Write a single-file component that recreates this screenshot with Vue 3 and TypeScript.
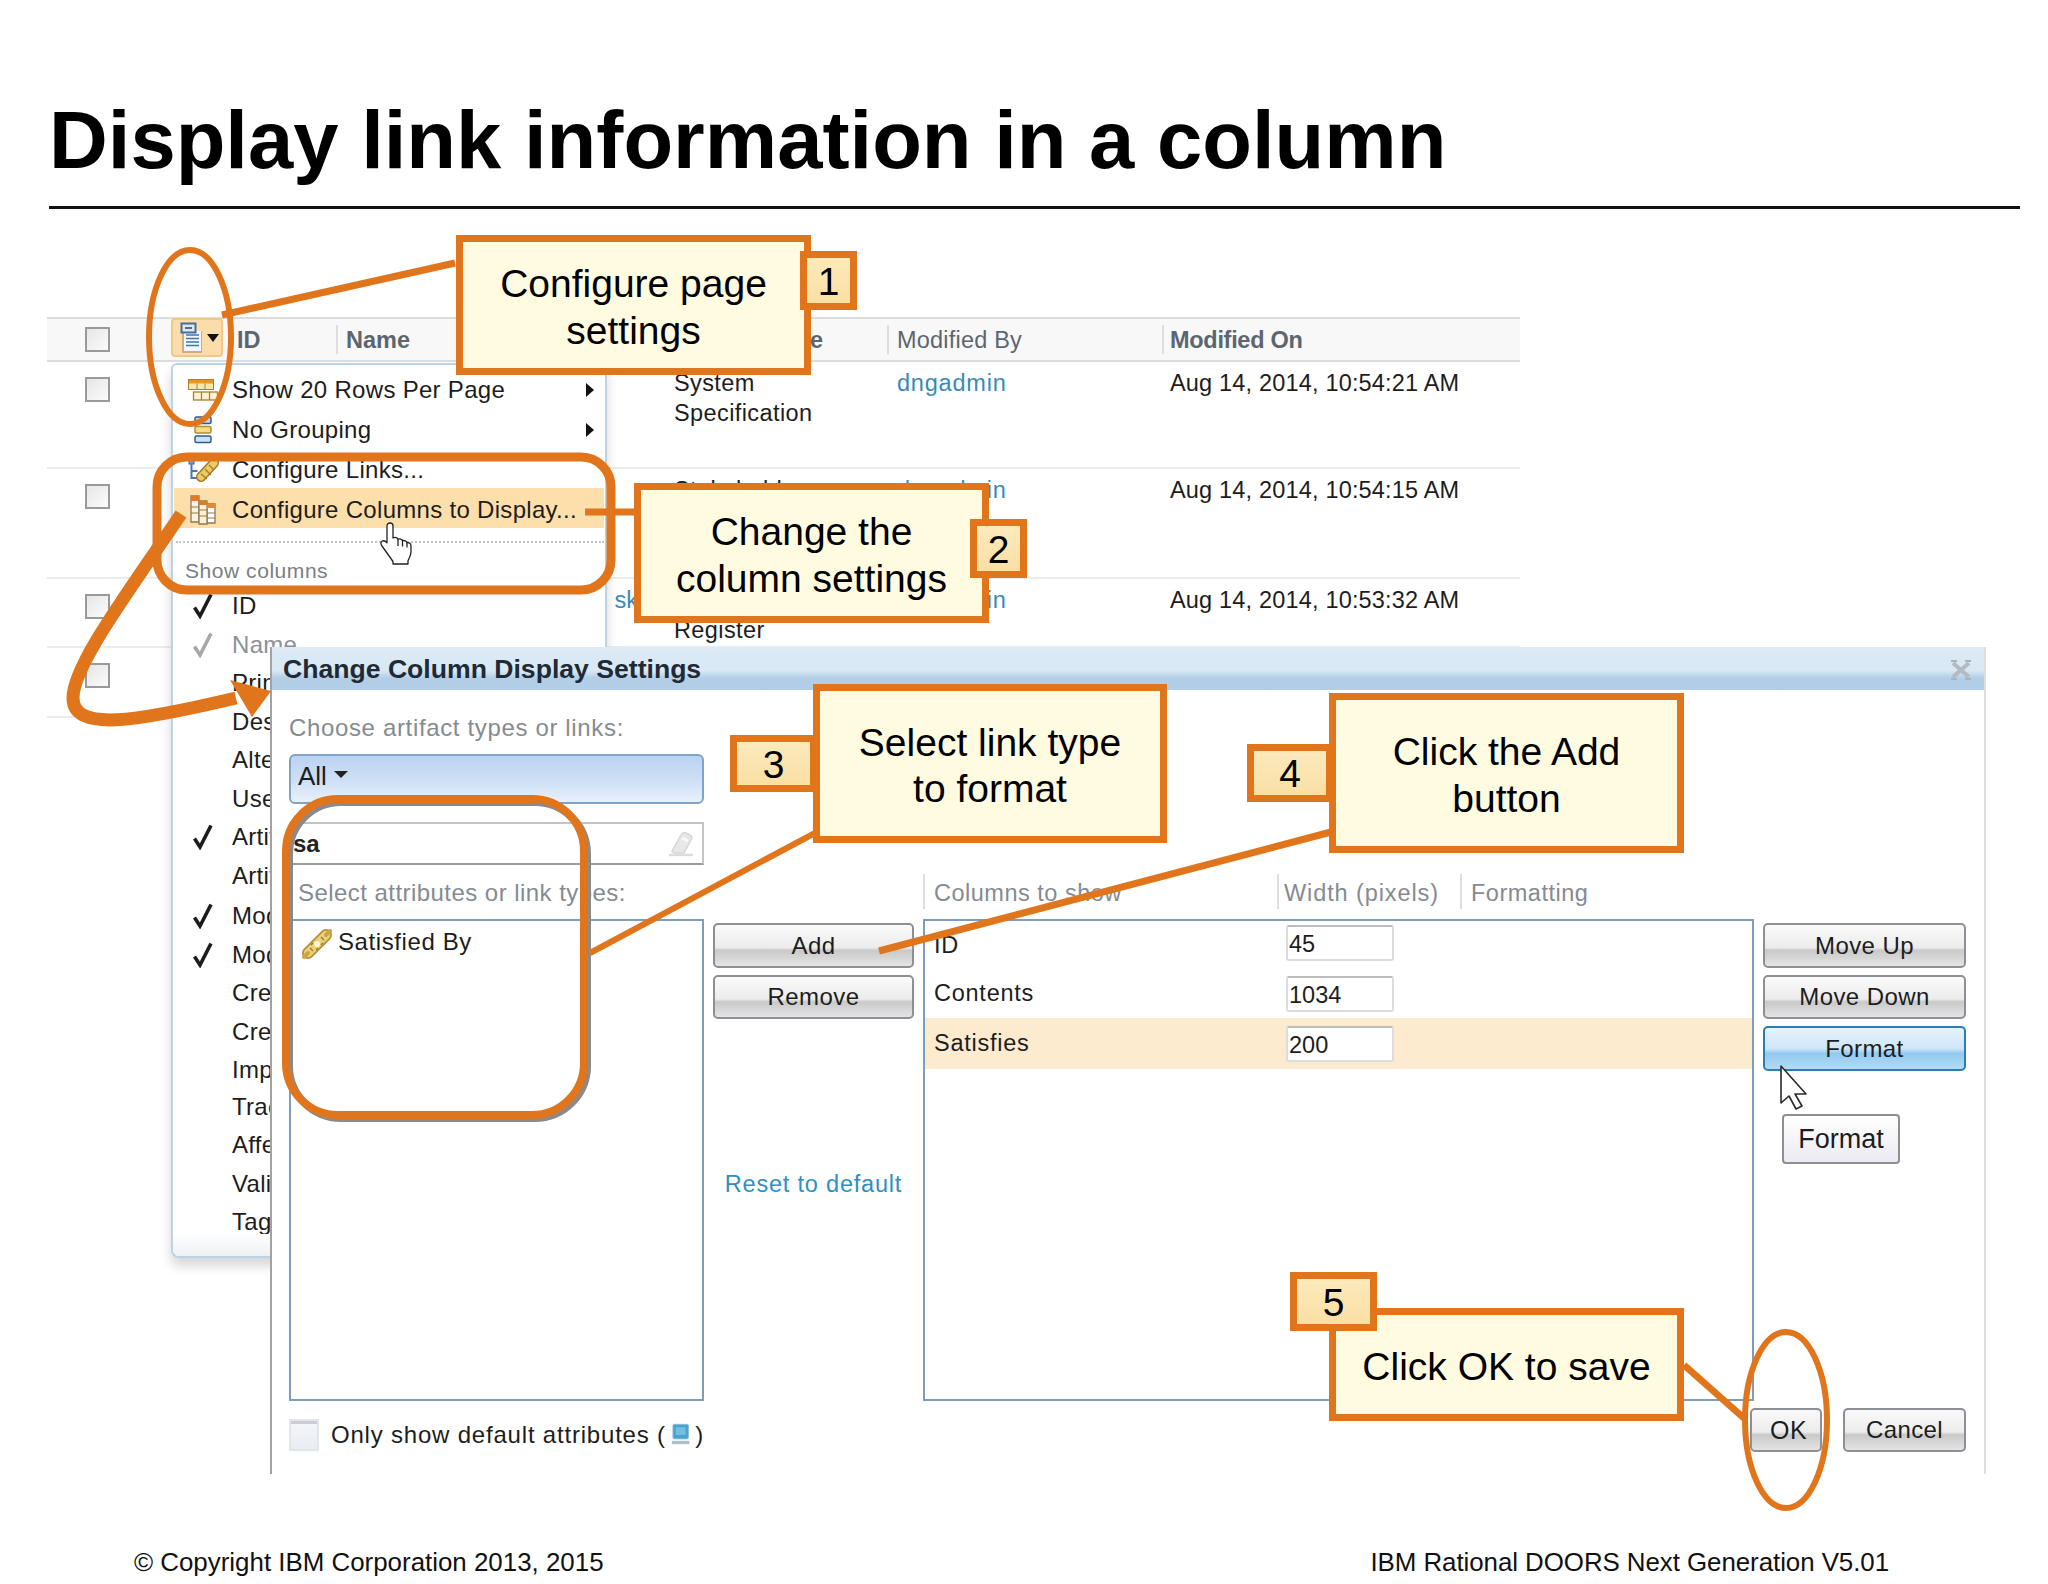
<script setup lang="ts">
interface MenuItem { label: string; icon?: string; arrow?: boolean; hl?: boolean }
interface ColItem { label: string; check?: 'on' | 'off'; dim?: boolean; cls?: string }

const rows = [
  { h: 107, top: ['System', 'Specification'], by: 'dngadmin', on: 'Aug 14, 2014, 10:54:21 AM', name: '' },
  { h: 110, top: ['Stakeholder', 'Requests'], by: 'dngadmin', on: 'Aug 14, 2014, 10:54:15 AM', name: '' },
  { h: 69, top: ['Risk', 'Register'], by: 'dngadmin', on: 'Aug 14, 2014, 10:53:32 AM', name: 'sk' },
  { h: 70, top: [], by: '', on: '', name: '' },
]
const actions: MenuItem[] = [
  { label: 'Show 20 Rows Per Page', icon: 'rows', arrow: true },
  { label: 'No Grouping', icon: 'group', arrow: true },
  { label: 'Configure Links...', icon: 'links' },
  { label: 'Configure Columns to Display...', icon: 'cols', hl: true },
]
const columns: ColItem[] = [
  { label: 'ID', check: 'on' },
  { label: 'Name', check: 'off', dim: true },
  { label: 'Primary Text' },
  { label: 'Description' },
  { label: 'Alternate Spelling' },
  { label: 'User Intent' },
  { label: 'Artifact Type', check: 'on' },
  { label: 'Artifact Format' },
  { label: 'Modified By', check: 'on', cls: 'down' },
  { label: 'Modified On', check: 'on' },
  { label: 'Created By' },
  { label: 'Created On' },
  { label: 'Imported From' },
  { label: 'Traced By', cls: 'up' },
  { label: 'Affected By' },
  { label: 'Validated By' },
  { label: 'Tags' },
]
const chosen = [
  { name: 'ID', width: '45', hl: false },
  { name: 'Contents', width: '1034', hl: false },
  { name: 'Satisfies', width: '200', hl: true },
]
const callouts = [
  { id: 'c1', lines: ['Configure page', 'settings'] },
  { id: 'c2', lines: ['Change the', 'column settings'] },
  { id: 'c3', lines: ['Select link type', 'to format'] },
  { id: 'c4', lines: ['Click the Add', 'button'] },
  { id: 'c5', lines: ['Click OK to save'] },
]
const badges = ['1', '2', '3', '4', '5']
</script>

<template>
  <div class="slide">
    <h1 class="title">Display link information in a column</h1>

    <section class="table">
      <div class="row head">
        <div class="cell first"><span class="box"></span></div>
        <div class="cell id-col">
          <span class="id-label">ID</span>
        </div>
        <div class="cell div strong">Name</div>
        <div class="cell strong type-col">Artifact Type</div>
        <div class="cell div medium">Modified By</div>
        <div class="cell div strong tight">Modified On</div>
      </div>
      <div v-for="(r, i) in rows" :key="i" class="row body" :style="{ height: r.h + 'px' }">
        <div class="cell"><span class="box"></span></div>
        <div class="cell"></div>
        <div class="cell name-col"><a v-if="r.name" class="link">{{ r.name }}</a></div>
        <div class="cell stack"><span v-for="t in r.top" :key="t">{{ t }}</span></div>
        <div class="cell"><a class="link by">{{ r.by }}</a></div>
        <div class="cell date">{{ r.on }}</div>
      </div>
    </section>

    <!-- toolbar button -->
    <div class="tool-btn">
      <svg width="24" height="32" viewBox="0 0 24 32">
        <path d="M2 9h20v22H2z" fill="#b89a6a" opacity=".7" />
        <path d="M4 9h17v20H4z" fill="#f4f8fd" />
        <path d="M6 13h13M6 16.500h13M6 20h13M6 23.500h13" stroke="#3f74b5" stroke-width="1.700" />
        <rect x="1.500" y="1.500" width="14" height="9" fill="#dbe7f3" stroke="#4a6d94" stroke-width="2" />
        <path d="M5 6h7" stroke="#4a6d94" stroke-width="2" />
      </svg>
      <i class="caret"></i>
    </div>

    <!-- column menu -->
    <div class="menu">
      <div
        v-for="m in actions"
        :key="m.label"
        class="item"
        :class="{ hl: m.hl }"
      >
        <span class="slot">
          <svg v-if="m.icon === 'rows'" width="30" height="22" viewBox="0 0 30 22">
            <rect x=".5" y=".5" width="25" height="10" fill="#f8e7a8" stroke="#a9802f" />
            <rect x="1" y="1" width="24" height="3.500" fill="#ec9425" />
            <path d="M9 4.500v6M17 4.500v6" stroke="#a9802f" />
            <rect x="5.500" y="13" width="24" height="8" fill="#fdf3d2" stroke="#a9802f" stroke-width="1.300" />
            <path d="M13.500 13v8M21.500 13v8" stroke="#a9802f" stroke-width="1.300" />
          </svg>
          <svg v-else-if="m.icon === 'group'" width="18" height="28" viewBox="0 0 18 28">
            <rect x="1" y="1" width="16" height="6.500" rx="1.500" fill="#bcd6ef" stroke="#2d5c8f" stroke-width="1.500" />
            <rect x="1" y="10.500" width="16" height="6.500" rx="1.500" fill="#f6dc85" stroke="#b08d2b" stroke-width="1.500" />
            <rect x="1" y="20" width="16" height="6.500" rx="1.500" fill="#cfe2f5" stroke="#2d5c8f" stroke-width="1.500" />
          </svg>
          <svg v-else-if="m.icon === 'links'" width="32" height="24" viewBox="0 0 32 24">
            <rect x="2" y="1" width="5" height="5" fill="#7b9bd6" stroke="#3e63a8" />
            <path d="M4.500 6v14h7M4.500 13h6" fill="none" stroke="#4c72b8" stroke-width="2" />
            <path d="M14 19 27 5" stroke="#a37a1e" stroke-width="10" stroke-linecap="round" />
            <path d="M14 19 27 5" stroke="#e9cb6c" stroke-width="7" stroke-linecap="round" />
            <path d="M14 16l6 5M18 11l6 6M22 7l5 5" stroke="#a37a1e" stroke-width="1.200" />
          </svg>
          <svg v-else-if="m.icon === 'cols'" width="26" height="30" viewBox="0 0 26 30">
            <path d="M1 1h8v26H1z" fill="#fbf3df" stroke="#8f7a52" stroke-width="1.300" />
            <path d="M17 9h8v19h-8z" fill="#fff" stroke="#8f7a52" stroke-width="1.300" />
            <path d="M9 6h8v23H9z" fill="#fbf1d4" stroke="#8f7a52" stroke-width="1.300" />
            <path d="M1 1h8v5H1zM9 6h8v4H9z" fill="#dd7d2a" />
            <path d="M17 9h8v4h-8z" fill="#e58a34" />
            <path d="M1 12h8M1 18h8M9 15h8M9 21h8M17 18h8M17 23h8" stroke="#8f7a52" />
          </svg>
        </span>
        <span>{{ m.label }}</span>
        <i v-if="m.arrow" class="tri"></i>
      </div>
      <div class="dots"></div>
      <div class="menu-head">Show columns</div>
      <div v-for="c in columns" :key="c.label" class="col-item" :class="[c.cls, { dim: c.dim }]">
        <span class="slot">
          <svg v-if="c.check" width="20" height="26" viewBox="0 0 20 26">
            <path
              d="M1.500 14.500 7 23 18 1.500"
              fill="none"
              :stroke="c.check === 'on' ? '#1c1c1c' : '#a8a8a8'"
              stroke-width="3.600"
            />
          </svg>
        </span>
        <span>{{ c.label }}</span>
      </div>
      <div class="menu-foot"></div>
    </div>

    <!-- dialog -->
    <div class="dialog">
      <header class="dlg-title">
        <span>Change Column Display Settings</span>
        <svg width="22" height="20" viewBox="0 0 22 20">
          <path d="M3 3 19 17M19 3 3 17" stroke="#b2bac2" stroke-width="4" />
          <path d="M1 1h6M15 1h6M1 19h6M15 19h6" stroke="#aab2ba" stroke-width="2" />
        </svg>
      </header>
      <div class="dlg-body">
        <div class="chooser">
          <label class="hint">Choose artifact types or links:</label>
          <div class="select">All <i class="caret big"></i></div>
          <div class="search">
            <span>sa</span>
            <svg width="26" height="26" viewBox="0 0 26 26">
              <path d="M4 20 13 4c1-2 3-3 5-2l4 2c2 1 2 3 1 5l-7 13H6z" fill="#e8e8e8" stroke="#d6d6d6" stroke-width="1.500" />
              <path d="M14 7l6 3" stroke="#fafafa" stroke-width="3" />
              <path d="M1 24h24" stroke="#dcdcdc" stroke-width="2.500" />
            </svg>
          </div>
        </div>
        <div class="hole"></div>
        <div class="hole"></div>
        <div class="hole"></div>

        <label class="hint sel-hint">Select attributes or link types:</label>
        <div class="hole"></div>
        <div class="col-heads">
          <span>Columns to show</span>
          <span>Width (pixels)</span>
          <span>Formatting</span>
        </div>
        <div class="hole"></div>

        <div class="list">
          <div class="attr">
            <svg width="30" height="30" viewBox="0 0 30 30">
              <path d="M6 24 24 6" stroke="#b58f33" stroke-width="12" stroke-linecap="round" />
              <path d="M6 24 24 6" stroke="#ebd07a" stroke-width="8.500" stroke-linecap="round" />
              <path d="M2 28 6 24M24 6 28 2" stroke="#c9a548" stroke-width="4" stroke-linecap="round" />
              <circle cx="15" cy="15" r="3" fill="#fff6d8" />
              <path d="M8 19l3 3M19 8l3 3M11 14l-2 2M21 14l-2 2M14 21l2-2" stroke="#a37a1e" stroke-width="1.400" />
            </svg>
            <span>Satisfied By</span>
          </div>
        </div>
        <div class="mid">
          <button class="btn tall">Add</button>
          <button class="btn">Remove</button>
          <a class="reset">Reset to default</a>
        </div>
        <div class="list picked">
          <div v-for="c in chosen" :key="c.name" class="pick" :class="{ on: c.hl }">
            <span class="pick-name">{{ c.name }}</span>
            <span class="num">{{ c.width }}</span>
          </div>
        </div>
        <div class="side">
          <button class="btn tall">Move Up</button>
          <button class="btn">Move Down</button>
          <button class="btn blue">Format</button>
        </div>

        <div class="only">
          <span class="only-box"></span>
          <span class="only-text">Only show default attributes (</span>
          <svg width="20" height="24" viewBox="0 0 20 24">
            <rect x="2" y="1" width="16" height="15" rx="1.500" fill="#4aa3cf" stroke="#8fbcd8" />
            <rect x="5" y="4" width="10" height="8" fill="#74bfe0" />
            <path d="M1 18h18v3.500H1z" fill="#aebfcc" />
          </svg>
          <span class="only-text">)</span>
        </div>
        <div class="hole"></div>
        <div class="actions">
          <button class="btn ok">OK</button>
          <button class="btn cancel">Cancel</button>
        </div>
      </div>
    </div>

    <div class="tip">Format</div>

    <!-- annotation strokes -->
    <svg class="ink" width="2048" height="1584" viewBox="0 0 2048 1584">
      <g fill="none" stroke="#e1751c">
        <ellipse cx="190" cy="337" rx="41" ry="87" stroke-width="6" />
        <path d="M222 315 455 263" stroke-width="7" />
        <rect x="157" y="457" width="454" height="133" rx="30" stroke-width="9" />
        <path d="M585 512H636" stroke-width="7" />
        <path d="M181 514C130 590 73 665 73 698 73 732 135 722 236 698" stroke-width="13" />
        <rect x="289" y="802" width="298" height="316" rx="52" stroke="#8a8a8a" stroke-width="8" />
        <rect x="286" y="799" width="298" height="316" rx="52" stroke-width="8" />
        <path d="M590 953 815 833" stroke-width="6" />
        <path d="M879 951 1331 832" stroke-width="7" />
        <path d="M1684 1365 1746 1420" stroke-width="7" />
        <ellipse cx="1786" cy="1420" rx="41" ry="88" stroke-width="6" />
      </g>
      <path d="M230 680 271 691 252 717Z" fill="#e1751c" />
      <!-- pointer hand -->
      <g transform="translate(380 522)" fill="#fff" stroke="#222" stroke-width="1.300" stroke-linejoin="round">
        <path d="M10 1c1.800 0 3 1.200 3 3v12c2-1 4.500-.6 5 1.200 1.800-.8 4 0 4.500 1.500 1.800-.6 4 .3 4.500 2 1.600-.4 4 .4 4 3v6c0 4-1.500 6-3 9v3.300H13v-2.500L2 24c-1.500-2-1.500-3.800 0-4.800 1.500-.8 3.500-.2 5 1.600V4c0-1.800 1.200-3 3-3z" />
        <path d="M18 17v7M22.500 18.500v6M27 20.500v5" fill="none" />
      </g>
      <!-- mouse arrow -->
      <path d="M1781 1066v37l8-7 7 13 6-3-7-12h11z" fill="#fff" stroke="#2a2a2a" stroke-width="1.600" stroke-linejoin="round" />
    </svg>

    <div v-for="c in callouts" :key="c.id" class="callout" :class="c.id">
      <span v-for="l in c.lines" :key="l">{{ l }}</span>
    </div>
    <div v-for="(b, i) in badges" :key="b" class="badge" :class="'b' + (i + 1)">{{ b }}</div>

    <footer class="footer">
      <span>© Copyright IBM Corporation 2013, 2015</span>
      <span class="foot-right">IBM Rational DOORS Next Generation V5.01</span>
    </footer>
  </div>
</template>

<style scoped>
* { box-sizing: border-box; }
.slide {
  position: relative;
  width: 2048px;
  height: 1584px;
  overflow: hidden;
  background: #fff;
  display: flex;
  flex-direction: column;
  font-family: "Liberation Sans", Arial, sans-serif;
  color: #1d1d1d;
}
.title {
  margin: 0 28px 0 49px;
  padding: 90px 0 16px;
  border-bottom: 3px solid #111;
  font-size: 81.400px;
  line-height: 100px;
  font-weight: 700;
  color: #000;
  white-space: nowrap;
}

/* table */
.table { margin: 108px 0 0 47px; width: 1473px; font-size: 23.500px; }
.row { display: grid; grid-template-columns: 124px 165px 328px 223px 275px 358px; }
.head { height: 45px; background: #f8f8f8; border-top: 2px solid #dcdcdc; border-bottom: 2px solid #dcdcdc; }
.head .cell { display: flex; align-items: center; padding: 1px 0 0 10px; color: #5d6670; }
.head .cell.first { padding: 0; }
.head .div { position: relative; }
.head .div::before { content: ""; position: absolute; left: 0; top: 6px; bottom: 6px; width: 2px; background: #dedede; }
.head .id-col { padding-left: 66px; }
.id-label, .strong { font-weight: 700; }
.medium { letter-spacing: .2px; }
.tight { letter-spacing: -.3px; padding-left: 8px !important; }
.type-col { padding-left: 10px; letter-spacing: .6px; }
.box {
  display: block;
  width: 25px;
  height: 25px;
  margin-left: 38px;
  border: 2px solid #9a9a9a;
  background: linear-gradient(135deg, #e6e6e6, #fbfbfb);
}
.body { border-bottom: 2px solid #ececec; }
.body .cell { padding: 6px 0 0 10px; line-height: 30px; }
.body .cell:first-child { padding: 15px 0 0; }
.stack { display: flex; flex-direction: column; letter-spacing: .4px; }
.by { letter-spacing: .8px; }
.date { letter-spacing: .18px; padding-left: 8px !important; }
.name-col { text-align: right; padding-right: 26px !important; }
.link { color: #3a8ab8; }

.tool-btn {
  position: absolute;
  left: 171px;
  top: 318px;
  width: 52px;
  height: 39px;
  display: flex;
  align-items: center;
  justify-content: flex-start;
  gap: 3px;
  padding-left: 7px;
  background: #fbdcab;
  border: 2px solid #f3c788;
  border-radius: 4px;
}
.caret { width: 0; height: 0; border: 6px solid transparent; border-top: 8px solid #111; border-bottom: 0; }

/* menu */
.menu {
  position: absolute;
  left: 171px;
  top: 363px;
  width: 436px;
  height: 895px;
  padding-top: 5px;
  background: #fff;
  border: 2px solid #bcd2e6;
  border-radius: 6px 6px 8px 8px;
  box-shadow: 0 8px 12px rgba(0, 0, 0, .16);
  font-size: 24px;
  letter-spacing: .3px;
  overflow: hidden;
}
.item { position: relative; height: 40px; display: flex; align-items: center; }
.item.hl { margin: -2px 1px 2px; padding-top: 4px; background: #fddfab; }
.item.hl .slot { flex-basis: 59px; margin-left: -1px; }
.slot { flex: 0 0 59px; display: flex; justify-content: center; align-items: center; }
.tri {
  position: absolute;
  left: 413px;
  top: 13px;
  border-left: 8px solid #111;
  border-top: 7px solid transparent;
  border-bottom: 7px solid transparent;
}
.dots { margin: 13px 1px 0 3px; border-top: 2px dotted #c4c4c4; }
.menu-head { margin: 14px 0 0 12px; height: 30px; line-height: 28px; font-size: 21px; letter-spacing: .55px; color: #7a7f85; }
.col-item { height: 38.500px; display: flex; align-items: center; white-space: nowrap; }
.col-item.dim { color: #8c9198; }
.col-item.down { margin-top: 2px; }
.col-item.up { margin-top: -2px; }
.menu-foot { position: absolute; left: 0; right: 0; bottom: 0; height: 22px; background: linear-gradient(#fff, #eef0f2); }

/* dialog */
.dialog {
  position: absolute;
  left: 270px;
  top: 647px;
  width: 1716px;
  height: 827px;
  background: #fff;
  border-left: 2px solid #a2a2a2;
  border-right: 2px solid #dfdfdf;
}
.dlg-title {
  height: 43px;
  padding: 2px 12px 0 11px;
  display: flex;
  align-items: center;
  justify-content: space-between;
  background: linear-gradient(#dcebf6 0, #d8e8f4 55%, #b3cee6 72%, #b2cde6 100%);
  font-size: 26.600px;
  font-weight: 700;
  color: #1f2a36;
}
.dlg-body {
  display: grid;
  grid-template-columns: 415px 201px 831px 203px;
  grid-template-rows: 184px 45px 482px 72px;
  column-gap: 9px;
  padding-left: 17px;
  font-size: 23.500px;
}
.hole { min-width: 0; }
.chooser { display: flex; flex-direction: column; }
.hint { color: #858b92; font-size: 24px; letter-spacing: .6px; white-space: nowrap; }
.chooser .hint { height: 49px; padding-top: 24px; line-height: 28px; letter-spacing: .65px; }
.select {
  height: 50px;
  margin-top: 15px;
  padding: 0 0 6px 7px;
  display: flex;
  align-items: center;
  gap: 7px;
  border: 2px solid #7fa4c8;
  border-radius: 6px;
  background: linear-gradient(#bad3f2, #cfe0f6 55%, #e9f1fb);
  font-size: 26px;
}
.caret.big { border-width: 7px 7px 0; border-top-color: #222; margin-bottom: 3px; }
.search {
  height: 43px;
  margin-top: 18px;
  padding: 0 8px 0 4px;
  display: flex;
  align-items: center;
  justify-content: space-between;
  border-top: 2px solid #c4c4c4;
  border-right: 2px solid #c4c4c4;
  border-bottom: 2px solid #9c9c9c;
  font-size: 24px;
  font-weight: 700;
  color: #222;
}
.sel-hint { padding: 5px 0 0 9px; line-height: 28px; letter-spacing: .45px; }
.col-heads {
  display: grid;
  grid-template-columns: 354px 183px 1fr;
  color: #858b92;
  letter-spacing: .5px;
}
.col-heads span { margin-bottom: 10px; padding: 3px 0 0 9px; line-height: 32px; border-left: 2px solid #dedede; white-space: nowrap; }
.col-heads span:nth-child(2) { padding-left: 5px; letter-spacing: .9px; }
.list { border: 2px solid #7d9cbe; background: #fff; }
.attr { display: flex; align-items: flex-start; gap: 6px; padding: 8px 0 0 11px; line-height: 26px; font-size: 24px; letter-spacing: .6px; }
.pick { height: 49px; display: grid; grid-template-columns: 352px 108px; align-items: center; padding-left: 9px; letter-spacing: .75px; }
.pick:first-child { height: 48px; }
.pick:first-child .num { margin-top: -4px; }
.pick.on { height: 51px; background: #fdebd0; }
.num {
  height: 36px;
  padding-left: 1px;
  line-height: 35px;
  letter-spacing: 0;
  background: #fff;
  border: 2px solid #dcdcdc;
  border-top-color: #bdbdbd;
  border-radius: 3px;
}
.mid, .side { display: flex; flex-direction: column; gap: 7px; padding-top: 4px; }
.btn {
  height: 44px;
  padding: 0;
  border: 2px solid #8c9096;
  border-radius: 5px;
  background: linear-gradient(#fafafa, #ececec 55%, #c9c9c9 62%, #e4e4e4);
  color: #1d1d1d;
  font: inherit;
  font-size: 24px;
  letter-spacing: .4px;
  text-align: center;
}
.btn.tall { height: 45px; }
.btn.blue { height: 45px; border-color: #2b7db8; background: linear-gradient(#e6f3fc, #cfe6f9 50%, #93c9f0 62%, #b4daf5); }
.reset { margin-top: 143px; text-align: center; line-height: 30px; color: #2e8fc2; letter-spacing: .8px; }
.only { display: flex; align-items: center; height: 32px; margin-top: 18px; gap: 5px; white-space: nowrap; font-size: 24px; letter-spacing: .8px; }
.only-box { width: 30px; height: 32px; margin-right: 7px; flex: none; border: 2px solid #e2e6ea; background: linear-gradient(#c9ced4 0, #c9ced4 10%, #f3f5f8 12%, #e8edf3); }
.actions { grid-column: 3 / 5; display: flex; justify-content: flex-end; gap: 21px; padding-top: 7px; align-self: start; }
.btn.ok { width: 72px; padding-left: 5px; font-size: 25px; }
.btn.cancel { width: 123px; }

.tip {
  position: absolute;
  left: 1782px;
  top: 1114px;
  width: 118px;
  height: 50px;
  display: flex;
  align-items: center;
  justify-content: center;
  font-size: 27px;
  background: linear-gradient(#fff, #eceaf2);
  border: 2px solid #8f8f8f;
  border-radius: 4px;
}

/* annotations */
.ink { position: absolute; left: 0; top: 0; pointer-events: none; }
.callout {
  position: absolute;
  display: flex;
  flex-direction: column;
  align-items: center;
  justify-content: center;
  padding-top: 5px;
  background: #fffbe1;
  border: 7px solid #e1751c;
  font-size: 39px;
  line-height: 46.500px;
  color: #000;
  white-space: nowrap;
}
.c1 { left: 456px; top: 235px; width: 355px; height: 140px; }
.c2 { left: 634px; top: 483px; width: 355px; height: 140px; }
.c3 { left: 813px; top: 684px; width: 354px; height: 159px; }
.c4 { left: 1329px; top: 693px; width: 355px; height: 160px; }
.c5 { left: 1329px; top: 1308px; width: 355px; height: 113px; }
.badge {
  position: absolute;
  display: flex;
  align-items: center;
  justify-content: center;
  padding-top: 2px;
  border: 7px solid #e1751c;
  background: linear-gradient(#fbeabc, #fbdfa4);
  font-size: 39px;
  color: #000;
}
.b1 { left: 800px; top: 251px; width: 57px; height: 59px; }
.b2 { left: 970px; top: 519px; width: 57px; height: 59px; }
.b3 { left: 730px; top: 735px; width: 87px; height: 57px; }
.b4 { left: 1247px; top: 744px; width: 86px; height: 58px; }
.b5 { left: 1290px; top: 1272px; width: 87px; height: 59px; }

.footer {
  position: absolute;
  left: 134px;
  right: 159px;
  bottom: 6px;
  display: flex;
  justify-content: space-between;
  font-size: 25.900px;
  line-height: 32px;
  color: #111;
}
.foot-right { letter-spacing: -.06px; }
</style>

<style>
html, body { margin: 0; background: #fff; }
</style>
